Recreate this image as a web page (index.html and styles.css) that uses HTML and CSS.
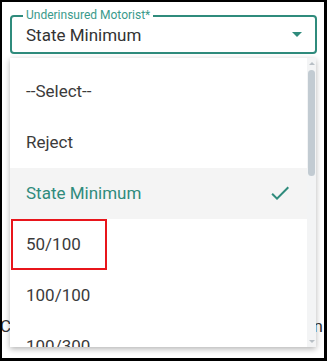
FILE: index.html
```html
<!DOCTYPE html>
<html lang="en">
<head>
    <meta charset="UTF-8">
    <meta name="viewport" content="width=device-width, initial-scale=1.0">
    <title>Underinsured Motorist</title>
    <link rel="stylesheet" href="styles.css">
</head>
<body>
    <div class="frame">
        <div class="field">
            <label class="field-label">Underinsured Motorist*</label>
            <div class="field-value">State Minimum</div>
            <span class="caret"></span>
        </div>

        <p class="behind"><span>C</span><span>n</span></p>

        <div class="menu">
            <ul class="options">
                <li>--Select--</li>
                <li>Reject</li>
                <li class="selected">
                    State Minimum
                    <svg class="check" viewBox="0 0 24 24" width="24" height="24">
                        <path d="M9 16.17L4.83 12l-1.42 1.41L9 19 21 7l-1.41-1.41z" fill="currentColor"/>
                    </svg>
                </li>
                <li>50/100</li>
                <li>100/100</li>
                <li>100/300</li>
            </ul>
            <div class="scrollbar">
                <span class="arrow-up"></span>
                <span class="thumb"></span>
                <span class="arrow-down"></span>
            </div>
        </div>

        <div class="highlight-box"></div>
    </div>
</body>
</html>
```

FILE: styles.css
```css
body {
    margin: 0;
    background-color: #000;
    font-family: Roboto, "Noto Sans", Arial, sans-serif;
}

.frame {
    position: relative;
    margin: 2px 3px 3px 2px;
    width: 322px;
    height: 356px;
    background-color: #fff;
    overflow: hidden;
}

.field {
    position: relative;
    display: flex;
    align-items: center;
    margin: 13px 7px 0 8px;
    height: 35px;
    border: 2px solid #2f8b7c;
    border-radius: 4px;
}

.field-label {
    position: absolute;
    top: -9px;
    left: 11px;
    padding: 0 3px;
    background-color: #fff;
    font-size: 12px;
    line-height: 14px;
    color: #3a9a8b;
}

.field-value {
    flex: 1;
    padding: 2px 0 0 14px;
    line-height: 33px;
    font-size: 17px;
    color: #333;
}

.caret {
    margin-right: 13px;
    width: 0;
    height: 0;
    border-left: 5px solid transparent;
    border-right: 5px solid transparent;
    border-top: 5px solid #2f8b7c;
}

.behind {
    display: flex;
    justify-content: space-between;
    margin: 262px 0 0;
    padding: 0 1px 0 0;
    font-size: 17px;
    line-height: 20px;
    color: #333;
}

.behind span:first-child {
    margin-left: -2px;
}

.menu {
    position: absolute;
    top: 56px;
    left: 8px;
    display: flex;
    width: 306px;
    height: 289px;
    background-color: #fff;
    box-shadow: 0 2px 6px rgba(0, 0, 0, 0.3);
    overflow: hidden;
}

.options {
    flex: 1;
    margin: 0;
    padding: 8px 0 0;
    list-style: none;
}

.options li {
    display: flex;
    align-items: center;
    justify-content: space-between;
    height: 51px;
    padding: 0 15px 2px 16px;
    box-sizing: border-box;
    font-size: 17px;
    color: #3b3b3b;
}

.options li.selected {
    background-color: #f4f4f4;
    color: #2f8b7c;
}

.check {
    color: #2f8b7c;
}

.scrollbar {
    position: relative;
    width: 9px;
    background-color: #f3f4f5;
}

.thumb {
    position: absolute;
    top: 12px;
    left: 1px;
    width: 7px;
    height: 106px;
    border-radius: 4px;
    background-color: #c2cbd2;
}

.arrow-up,
.arrow-down {
    position: absolute;
    left: 2px;
    width: 0;
    height: 0;
    border-left: 3px solid transparent;
    border-right: 3px solid transparent;
}

.arrow-up {
    top: 4px;
    border-bottom: 3px solid #b8bfc5;
}

.arrow-down {
    bottom: 4px;
    border-top: 3px solid #b8bfc5;
}

.highlight-box {
    position: absolute;
    top: 217px;
    left: 9px;
    width: 92px;
    height: 47px;
    border: 2px solid #e8151b;
}
```
